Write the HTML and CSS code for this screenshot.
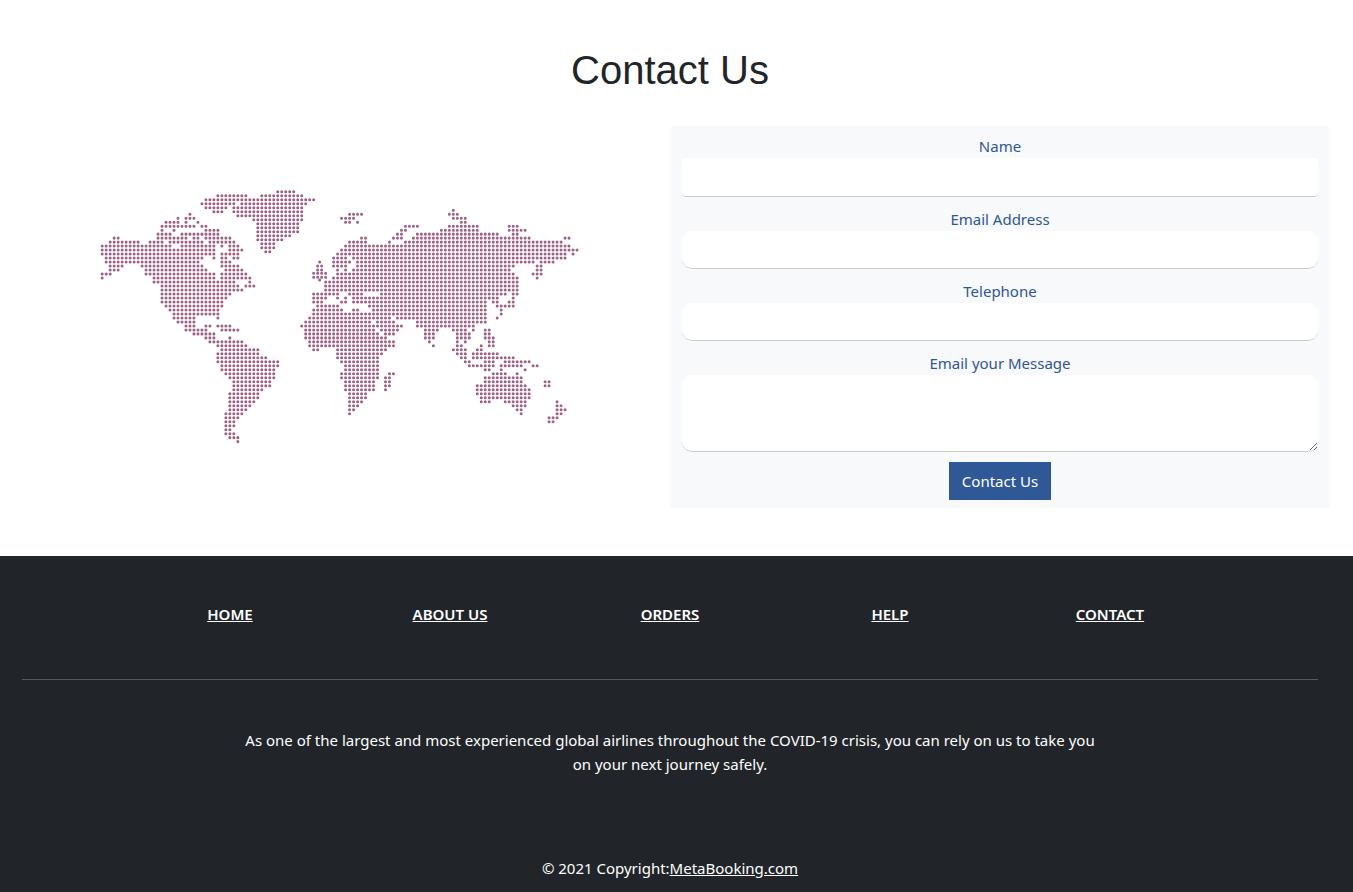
FILE: index.html
```html
<!DOCTYPE html>
<html lang="en">
<head>
<meta charset="utf-8">
<meta name="viewport" content="width=device-width, initial-scale=1">
<title>Contact Us - MetaBooking</title>
<link rel="stylesheet" href="styles.css">
</head>
<body>
<main class="contact">
  <h1 class="contact-title">Contact Us</h1>
  <div class="contact-columns">
    <svg class="map" viewBox="-23.1 -22.1 165.4 95.7" role="img" aria-label="World map">
      <!-- Greenland and the Arctic islands -->
      <path class="map-dots" transform="translate(0 -5.6)" d="M44 0h4.1M29 1h7.1M40 1h10.1M26 2h27.1M25 3h8.1M35 3h16.1M26 4h5.1M33 4h17.1M28 5h2.1M33 5h17.1M34 6h16.1M38 7h12.1M39 8h10.1M39 9h10.1M39 10h10.1M39 11h8.1M39 12h6.1M40 13h3.1M40 14h3.1M41 15h1.1"/>
      <!-- Great Britain and Ireland -->
      <path class="map-dots" d="M54.5 12h.1M54 13h1.1M54 14h1.1M53 14.8h3.1M53 15.8h3.1M54.5 16.5h.1"/>
      <!-- The Americas -->
      <path class="map-dots" d="M22 0h.1M19 1h.1M21 1h2.1M16 2h3.1M21 2h.1M24 2h.1M15 3h8.1M25 3h1.1M15 4h.1M18 4h.1M26 4h3.1M14 5h3.1M20 5h9.1M3 6h1.1M14 6h7.1M23 6h1.1M26 6h6.1M2 7h7.1M12 7h3.1M17 7h8.1M27 7h6.1M0 8h17.1M20 8h8.1M30 8h.1M32 8h2.1M0 9h28.1M32 9h3.1M0 10h28.1M30 10h4.1M1 11h24.1M28 11h.1M30 11h1.1M33 11h1.1M1 12h23.1M30 12h2.1M2 13h3.1M10 13h15.1M30 13h4.1M2 14h2.1M11 14h15.1M31 14h4.1M0 15h2.1M11 15h17.1M30 15h6.1M0 16h.1M13 16h15.1M30 16h7.1M13 17h20.1M37 17h.1M15 18h19.1M36 18h2.1M15 19h20.1M15 20h17.1M15 21h16.1M15 22h15.1M16 23h14.1M17 24h12.1M18 25h11.1M18 26h5.1M29 26h.1M19 27h4.1M21 28h2.1M26 28h1.1M29 28h3.1M21 29h5.1M30 29h4.1M23 30h5.1M26 31h2.1M32 31h.1M27 32h8.1M29 33h7.1M30 34h9.1M29 35h10.1M29 36h12.1M29 37h15.1M30 38h14.1M30 39h13.1M31 40h12.1M32 41h11.1M33 42h9.1M33 43h9.1M33 44h7.1M32 45h7.1M32 46h7.1M32 47h6.1M32 48h5.1M32 49h4.1M31 50h4.1M31 51h3.1M31 52h2.1M31 53h2.1M31 54h1.1M31 55h2.1M32 56h2.1M34 57h.1"/>
      <!-- Europe, Asia and Africa -->
      <path class="map-dots" d="M88 -1h.1M62 0h3.1M87 0h2.1M60 1h3.1M88 1h3.1M61 2h1.1M64 2h.1M90 2h1.1M76 3h3.1M87 3h7.1M102 3h2.1M75 4h1.1M85 4h9.1M102 4h4.1M74 5h1.1M79 5h20.1M103 5h1.1M65 6h1.1M73 6h2.1M78 6h29.1M116 6h1.1M62 7h4.1M72 7h.1M76 7h39.1M61 8h56.1M60 9h59.1M59 10h57.1M118 10h.1M58 11h3.1M63 11h53.1M58 12h4.1M64 12h44.1M110 12h3.1M58 13h3.1M64 13h39.1M109 13h1.1M59 14h.1M61 14h.1M63 14h39.1M109 14h1.1M59 15h44.1M108 15h2.1M58 16h46.1M109 16h.1M56 17h48.1M56 18h48.1M56 19h48.1M53 20h6.1M62 20h3.1M70 20h31.1M103 20h1.1M53 21h3.1M59 21h.1M61 21h.1M63 21h36.1M103 21h.1M53 22h2.1M60 22h1.1M63 22h33.1M98 22h1.1M102 22h1.1M54 23h5.1M67 23h29.1M99 23h4.1M53 24h7.1M63 24h1.1M68 24h28.1M100 24h.1M53 25h43.1M100 25h.1M52 26h20.1M74 26h22.1M99 26h.1M51 27h16.1M69 27h4.1M79 27h17.1M50 28h25.1M79 28h14.1M51 29h17.1M70 29h4.1M81 29h3.1M88 29h3.1M93 29h.1M96 29h1.1M51 30h18.1M71 30h2.1M81 30h2.1M89 30h3.1M96 30h1.1M51 31h20.1M81 31h2.1M89 31h3.1M96 31h2.1M52 32h21.1M82 32h.1M89 32h.1M91 32h.1M97 32h1.1M52 33h21.1M83 33h.1M89 33h1.1M95 33h.1M97 33h1.1M53 34h1.1M59 34h12.1M88 34h3.1M94 34h1.1M59 35h11.1M89 35h2.1M93 35h6.1M59 36h10.1M90 36h1.1M93 36h10.1M60 37h9.1M91 37h1.1M96 37h2.1M101 37h6.1M61 38h8.1M92 38h6.1M100 38h5.1M108 38h1.1M61 39h8.1M96 39h1.1M100 39h.1M106 39h.1M60 40h9.1M72 40h1.1M60 41h9.1M71 41h1.1M61 42h7.1M71 42h1.1M61 43h7.1M71 43h1.1M61 44h7.1M71 44h.1M62 45h4.1M62 46h4.1M62 47h3.1M62 48h2.1M62 49h1.1M62 50h.1"/>
      <!-- Australia, New Zealand and the Pacific islands -->
      <path class="map-dots" d="M98 40h3.1M104 40h.1M96 41h9.1M96 42h9.1M111 42h1.1M94 43h12.1M111 43h1.1M94 44h13.1M94 45h13.1M95 46h12.1M95 47h2.1M101 47h5.1M114 47h.1M103 48h3.1M114 48h1.1M104 49h1.1M114 49h2.1M105 50h.1M114 50h1.1M112 51h2.1M112 52h1.1"/>
    </svg>
    <form class="contact-form">
      <label class="field-label" for="name">Name</label>
      <input class="field field-name" id="name" type="text">
      <label class="field-label" for="email">Email Address</label>
      <input class="field" id="email" type="email">
      <label class="field-label" for="phone">Telephone</label>
      <input class="field" id="phone" type="tel">
      <label class="field-label" for="message">Email your Message</label>
      <textarea class="field field-message" id="message"></textarea>
      <button class="submit" type="submit">Contact Us</button>
    </form>
  </div>
</main>
<footer class="footer">
  <nav class="footer-nav">
    <a href="#">HOME</a>
    <a href="#">ABOUT US</a>
    <a href="#">ORDERS</a>
    <a href="#">HELP</a>
    <a href="#">CONTACT</a>
  </nav>
  <hr class="divider">
  <p class="about">As one of the largest and most experienced global airlines throughout the COVID-19 crisis, you can rely on us to take you on your next journey safely.</p>
  <p class="copyright">© 2021 Copyright:<a href="#">MetaBooking.com</a></p>
</footer>
</body>
</html>
```
FILE: styles.css
```css
*, *::before, *::after {
  box-sizing: border-box;
}

body {
  margin: 0;
  background: #fff;
  color: #212529;
  font-family: "Segoe UI", "Noto Sans", "Open Sans", sans-serif;
  font-size: 15px;
  line-height: 24px;
}

.contact {
  padding: 46px 23px 48px 10px;
}

.contact-title {
  margin: 0 0 32px;
  font-family: "Liberation Sans", Arial, sans-serif;
  font-size: 40px;
  font-weight: 400;
  line-height: 48px;
  text-align: center;
}

.contact-columns {
  display: grid;
  grid-template-columns: 1fr 1fr;
  align-items: center;
}

.map {
  display: block;
  width: 100%;
  height: auto;
}

.map-dots {
  fill: none;
  stroke: #a05f84;
  stroke-width: 0.76;
  stroke-linecap: round;
  stroke-dasharray: 0 1;
}

.contact-form {
  display: flex;
  flex-direction: column;
  align-items: center;
  padding: 8px 12px;
  border-radius: 4px;
  background: #f8f9fb;
}

.field-label {
  color: #2f5597;
}

.field {
  width: 100%;
  height: 38px;
  margin: 0 0 10px;
  padding: 6px 12px;
  border: 0;
  border-bottom: 1px solid #ccc;
  border-radius: 10px;
  background: #fff;
  color: inherit;
  font: inherit;
}

.field-name {
  height: 39px;
  border-radius: 4px;
}

.field-message {
  height: 77px;
  resize: vertical;
}

.submit {
  padding: 7px 13px;
  border: 0;
  background: #2f5897;
  color: #fff;
  font: inherit;
}

.footer {
  padding: 46px 23px 12px 10px;
  background: #212529;
  color: #fff;
  text-align: center;
}

.footer a {
  color: #fff;
}

.footer-nav {
  display: grid;
  grid-template-columns: repeat(5, 1fr);
  width: 83.333%;
  margin: 0 auto;
  font-weight: 600;
}

.divider {
  margin: 53px 12px 48px;
  border: 0;
  border-top: 1px solid #585b5e;
}

.about {
  width: 66%;
  margin: 0 auto;
}

.copyright {
  margin: 80px 0 0;
}
```
